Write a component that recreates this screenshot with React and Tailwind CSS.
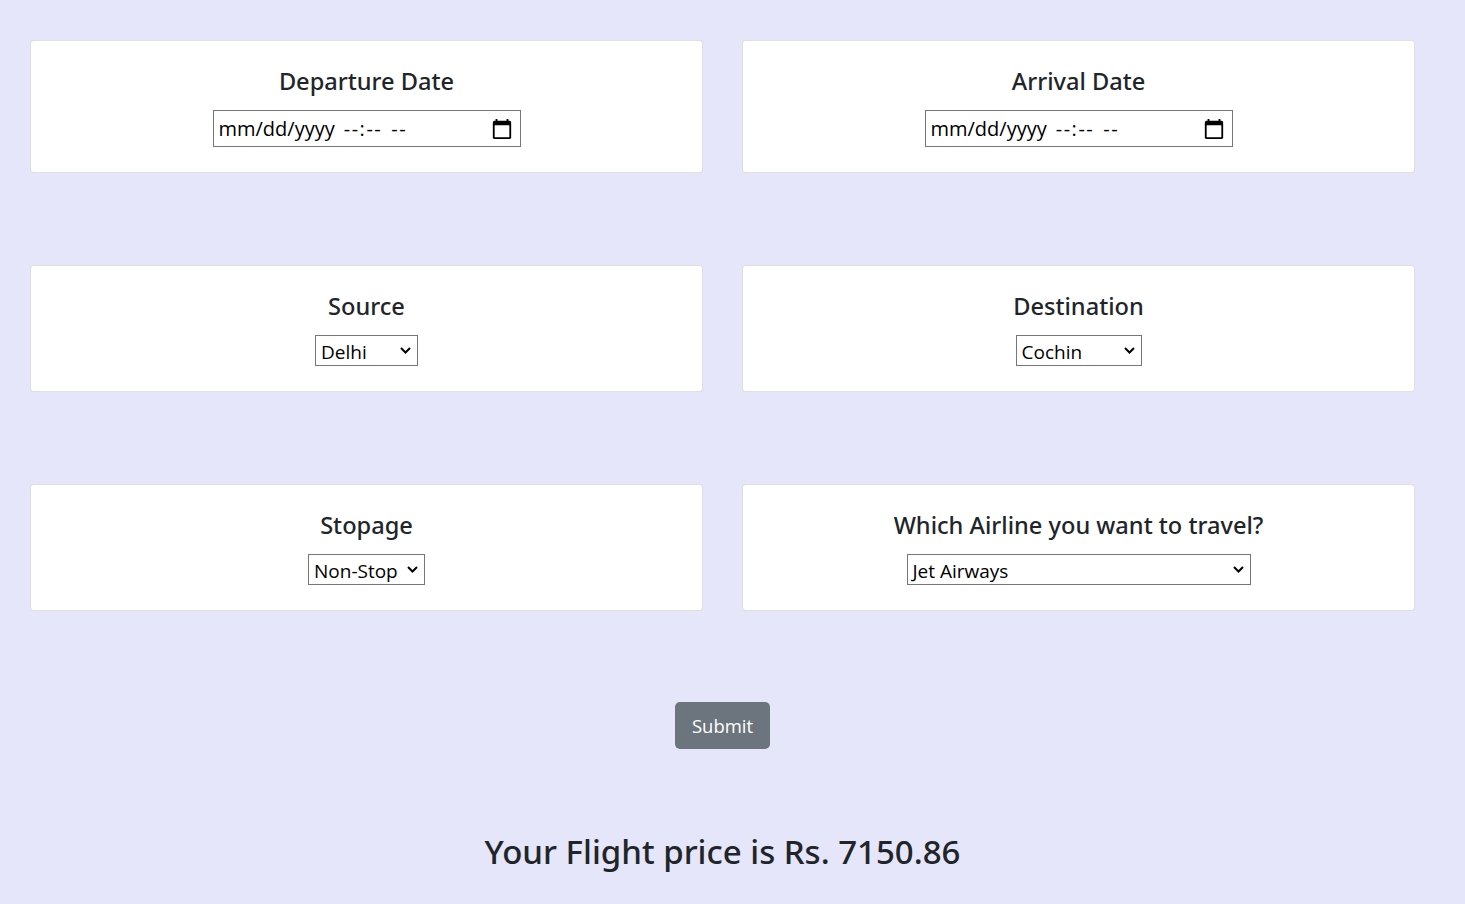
import React from "react";

function Calendar() {
  return (
    <svg width="22" height="22" viewBox="0 0 24 24" className="shrink-0">
      <path
        fill="#000"
        d="M20 3h-1V1h-2v2H7V1H5v2H4c-1.1 0-2 .9-2 2v16c0 1.1.9 2 2 2h16c1.1 0 2-.9 2-2V5c0-1.1-.9-2-2-2zm0 18H4V8h16v13z"
      />
    </svg>
  );
}

function Chevron() {
  return (
    <svg width="11" height="7" viewBox="0 0 11 7" className="shrink-0">
      <polyline points="1,1 5.5,5.5 10,1" fill="none" stroke="#000" strokeWidth="2" />
    </svg>
  );
}

function DateBox() {
  return (
    <div className="w-[308px] h-[37px] border border-[#767676] bg-white flex items-center justify-between pl-[5px] pr-[7px] text-[20px] text-black">
      <div className="flex items-center leading-none">
        <span>mm/dd/yyyy</span>
        <span className="ml-[9px] tracking-[1.5px]">--:--</span>
        <span className="ml-[9px] tracking-[1.5px]">--</span>
      </div>
      <Calendar />
    </div>
  );
}

function SelectBox({ value, width }) {
  return (
    <div
      className={`${width} h-[31px] border border-[#767676] bg-white flex items-center justify-between pl-[5px] pr-[6px] text-[19px] text-black`}
    >
      <span className="leading-none pt-[3px]">{value}</span>
      <Chevron />
    </div>
  );
}

function Card({ title, children }) {
  return (
    <div className="bg-white border border-black/[0.125] rounded-[4px] flex flex-col items-center pt-[26px] pb-[25px]">
      <h4 className="font-['Noto_Sans',sans-serif] text-[23.6px] leading-[29px] font-medium mb-[14px]">{title}</h4>
      {children}
    </div>
  );
}

export default function App() {
  return (
    <div className="min-h-screen bg-[#e6e6fa] text-[#212529] font-['Open_Sans',sans-serif]">
      <div className="w-[1385px] ml-[30px] pt-[40px] pb-[20px]">
        <div className="grid grid-cols-2 gap-x-[39px] gap-y-[92px]">
          <Card title="Departure Date">
            <DateBox />
          </Card>
          <Card title="Arrival Date">
            <DateBox />
          </Card>
          <Card title="Source">
            <SelectBox value="Delhi" width="w-[103px]" />
          </Card>
          <Card title="Destination">
            <SelectBox value="Cochin" width="w-[126px]" />
          </Card>
          <Card title="Stopage">
            <SelectBox value="Non-Stop" width="w-[117px]" />
          </Card>
          <Card title="Which Airline you want to travel?">
            <SelectBox value="Jet Airways" width="w-[344px]" />
          </Card>
        </div>
        <div className="flex justify-center mt-[91px]">
          <button className="w-[95px] h-[47px] rounded-[5px] bg-[#6c757d] text-white text-[18.5px] flex items-center justify-center">
            Submit
          </button>
        </div>
        <h2 className="mt-[81px] text-center font-['Noto_Sans',sans-serif] text-[33px] leading-[44px] font-medium">
          Your Flight price is Rs. 7150.86
        </h2>
      </div>
    </div>
  );
}
